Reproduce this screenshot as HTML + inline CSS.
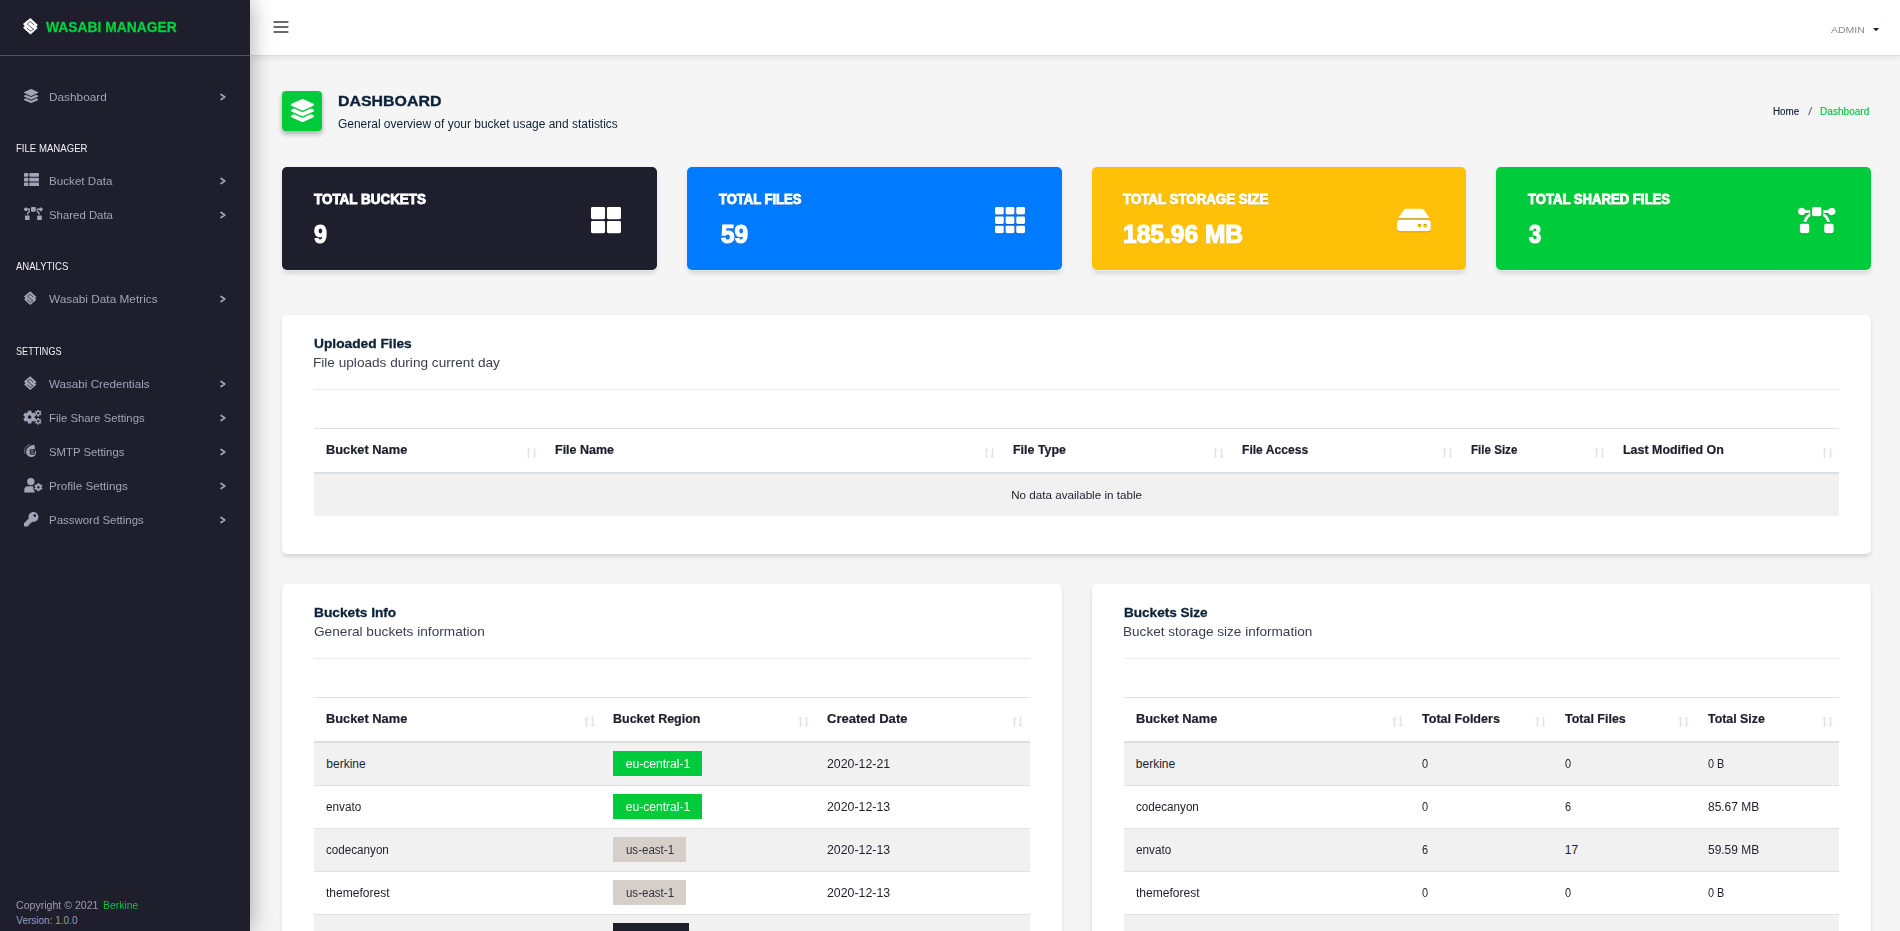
<!DOCTYPE html>
<html lang="en">
<head>
<meta charset="utf-8">
<title>Wasabi Manager - Dashboard</title>
<style>
*{box-sizing:border-box}
html,body{margin:0;padding:0}
body{width:1900px;height:931px;overflow:hidden;background:#f5f5f5;font-family:"Liberation Sans",sans-serif;font-size:12px;color:#1e1e2d;position:relative}
h1,h3,h5,h6,p,ol{margin:0;padding:0;font-weight:inherit;font-size:inherit;list-style:none}
a{text-decoration:none;color:inherit}
.t{display:inline-block;white-space:pre;line-height:1;transform-origin:left center}
.i{position:absolute;display:block;overflow:visible}
.sidebar{position:absolute;left:0;top:0;width:250px;height:931px;background:#1e1e2d;z-index:5;box-shadow:0 0 22px rgba(0,0,0,.36)}
.brand{position:absolute;left:0;top:0;width:250px;height:56px;border-bottom:1px solid #4d5364}
.topbar{position:absolute;left:250px;top:0;width:1650px;height:55px;background:#fff;z-index:3;box-shadow:0 1px 0 #dadee6,0 3px 6px rgba(0,0,0,.075)}
.topbar .i,.topbar .t{margin-left:-250px}
.phicon{position:absolute;left:282px;top:91px;width:40px;height:40px;border-radius:4px;background:#00cc3b;box-shadow:0 3px 5px rgba(0,0,0,.3)}
.stat{position:absolute;top:167px;width:374.75px;height:103px;border-radius:5px;box-shadow:0 0 0 .8px #eef0f5,0 3.5px 5px -1px rgba(0,0,0,.15)}
.stat .t{text-shadow:0 1px 1px rgba(0,0,0,.22)}
.si{position:absolute;display:block;filter:drop-shadow(0 1px .6px rgba(0,0,0,.22))}
.si .i{position:static}
.card{position:absolute;background:#fff;border-radius:5px;box-shadow:0 2.5px 5px -1px rgba(0,0,0,.17)}
.card hr{position:absolute;left:32px;right:32px;margin:0;border:0;border-top:1px solid #e9ebf0;height:0}
table.dt{position:absolute;border-collapse:separate;border-spacing:0;table-layout:fixed}
.dt th{position:relative;height:44px;padding:0 0 0 12.3px;text-align:left;vertical-align:middle;border-top:1px solid #dee2e6;font-weight:700;color:#1e1e2d}
.dt td{height:43px;padding:0 0 0 12.3px;vertical-align:middle;border-top:1px solid #dee2e6;color:#1e1e2d}
.dt tbody tr:first-child td{border-top:2px solid #dadfe5;height:44px}
.dt tr.odd td{background:#f1f1f1}
.badge{position:relative;top:-.6px;display:inline-block;height:25px;line-height:25px;text-align:center;vertical-align:middle}
.badge .t{line-height:26px}
</style>
</head>
<body>

<aside class="sidebar">
  <div class="brand"><svg class="i" style="left:23.3px;top:17.7px" width="15" height="16.5" viewBox="0 0 15 16.5"><path fill="#fff" d="M7.4 0 L14.9 6.9 L13.2 8.5 L14.7 10.1 L7.5 16.5 L0.1 9.7 L1.8 8.1 L0 6.1 Z"/><path fill="none" stroke="#1e1e2d" stroke-opacity="0.7" stroke-width="1.0" d="M11.2 7.0 L7.2 3.5 L4.2 6.0 L10.6 11.4 L7.6 13.2 L3.6 9.8"/></svg><span class="t" style="font-size:15.4px;font-weight:700;-webkit-text-stroke:0.3px currentColor;transform:scaleX(0.8999);position:absolute;left:46.05px;top:19.46px;color:#00d13f;">WASABI MANAGER</span></div>
  <nav>
    <a class="mi" href="#"><svg class="i" width="14.20" height="14.2" viewBox="0 0 512 512" style="left:23.8px;top:88.7px"><path fill="#a2a3b7" d="M12.41 148.02l232.94 105.67c6.8 3.09 14.49 3.09 21.29 0l232.94-105.67c16.55-7.51 16.55-32.52 0-40.03L266.65 2.31a25.607 25.607 0 0 0-21.29 0L12.41 107.98c-16.55 7.51-16.55 32.53 0 40.04zm487.18 88.28l-58.09-26.33-161.64 73.27c-7.56 3.43-15.59 5.17-23.86 5.17s-16.29-1.74-23.86-5.17L70.51 209.97l-58.1 26.33c-16.55 7.5-16.55 32.5 0 40l232.94 105.59c6.8 3.08 14.49 3.08 21.29 0L499.59 276.3c16.55-7.5 16.55-32.5 0-40zm0 127.8l-57.87-26.23-161.86 73.37c-7.56 3.43-15.59 5.17-23.86 5.17s-16.29-1.74-23.86-5.17L70.29 337.87 12.41 364.1c-16.55 7.5-16.55 32.5 0 40l232.94 105.59c6.8 3.08 14.49 3.08 21.29 0L499.59 404.1c16.55-7.5 16.55-32.5 0-40z"/></svg><span class="t" style="font-size:11.6px;transform:scaleX(1.0183);position:absolute;left:49.30px;top:91.38px;color:#a2a3b7;">Dashboard</span><svg class="i" style="left:219px;top:91.5px" width="8" height="10" viewBox="0 0 8 10"><path d="M2.1 2.45 L5.8 5 L2.1 7.55" fill="none" stroke="#a2a3b7" stroke-width="1.75" stroke-linecap="round" stroke-linejoin="round"/></svg></a>
    <h6 class="sec"><span class="t" style="font-size:10.1px;transform:scaleX(0.9510);position:absolute;left:16.30px;top:144.15px;color:#f0f0f5;">FILE MANAGER</span></h6>
    <a class="mi" href="#"><svg class="i" style="left:23.5px;top:173px" width="15" height="13.1" viewBox="0 0 15 13.1" fill="#a2a3b7"><rect x="0" y="0.00" width="4.4" height="3.7" rx=".7"/><rect x="5.3" y="0.00" width="9.7" height="3.7" rx=".7"/><rect x="0" y="4.70" width="4.4" height="3.7" rx=".7"/><rect x="5.3" y="4.70" width="9.7" height="3.7" rx=".7"/><rect x="0" y="9.40" width="4.4" height="3.7" rx=".7"/><rect x="5.3" y="9.40" width="9.7" height="3.7" rx=".7"/></svg><span class="t" style="font-size:11.6px;transform:scaleX(1.0046);position:absolute;left:49.30px;top:175.38px;color:#a2a3b7;">Bucket Data</span><svg class="i" style="left:219px;top:175.5px" width="8" height="10" viewBox="0 0 8 10"><path d="M2.1 2.45 L5.8 5 L2.1 7.55" fill="none" stroke="#a2a3b7" stroke-width="1.75" stroke-linecap="round" stroke-linejoin="round"/></svg></a>
    <a class="mi" href="#"><svg class="i" width="18.75" height="15" viewBox="0 0 640 512" style="left:23.5px;top:206.3px"><path fill="#a2a3b7" d="M368 32h-96c-17.67 0-32 14.33-32 32v96c0 17.67 14.33 32 32 32h96c17.67 0 32-14.33 32-32V64c0-17.67-14.33-32-32-32zM208 88h-84.75C113.75 64.56 90.84 48 64 48 28.66 48 0 76.65 0 112s28.66 64 64 64c26.84 0 49.75-16.56 59.25-40h79.73c-55.37 32.52-95.86 87.32-109.54 152h49.4c11.3-41.61 36.77-77.21 71.04-101.56-3.7-8.08-5.88-16.99-5.88-26.44V88zm-48 232H64c-17.67 0-32 14.33-32 32v96c0 17.67 14.33 32 32 32h96c17.67 0 32-14.33 32-32v-96c0-17.67-14.33-32-32-32zM576 48c-26.84 0-49.75 16.56-59.25 40H432v72c0 9.45-2.19 18.36-5.88 26.44 34.27 24.35 59.74 59.95 71.04 101.56h49.4c-13.68-64.68-54.17-119.48-109.54-152h79.73c9.5 23.44 32.41 40 59.25 40 35.34 0 64-28.65 64-64s-28.66-64-64-64zm0 272h-96c-17.67 0-32 14.33-32 32v96c0 17.67 14.33 32 32 32h96c17.67 0 32-14.33 32-32v-96c0-17.67-14.33-32-32-32z"/></svg><span class="t" style="font-size:11.6px;transform:scaleX(0.9825);position:absolute;left:49.30px;top:209.38px;color:#a2a3b7;">Shared Data</span><svg class="i" style="left:219px;top:209.5px" width="8" height="10" viewBox="0 0 8 10"><path d="M2.1 2.45 L5.8 5 L2.1 7.55" fill="none" stroke="#a2a3b7" stroke-width="1.75" stroke-linecap="round" stroke-linejoin="round"/></svg></a>
    <h6 class="sec"><span class="t" style="font-size:10.1px;transform:scaleX(0.9441);position:absolute;left:16.30px;top:262.15px;color:#f0f0f5;">ANALYTICS</span></h6>
    <a class="mi" href="#"><svg class="i" style="left:23.6px;top:290.8px" width="12.6" height="14.4" viewBox="0 0 15 16.5"><path fill="#a2a3b7" d="M7.4 0 L14.9 6.9 L13.2 8.5 L14.7 10.1 L7.5 16.5 L0.1 9.7 L1.8 8.1 L0 6.1 Z"/><path fill="none" stroke="#1e1e2d" stroke-opacity="0.85" stroke-width="1.0" d="M11.2 7.0 L7.2 3.5 L4.2 6.0 L10.6 11.4 L7.6 13.2 L3.6 9.8"/></svg><span class="t" style="font-size:11.6px;transform:scaleX(1.0195);position:absolute;left:49.30px;top:293.38px;color:#a2a3b7;">Wasabi Data Metrics</span><svg class="i" style="left:219px;top:293.6px" width="8" height="10" viewBox="0 0 8 10"><path d="M2.1 2.45 L5.8 5 L2.1 7.55" fill="none" stroke="#a2a3b7" stroke-width="1.75" stroke-linecap="round" stroke-linejoin="round"/></svg></a>
    <h6 class="sec"><span class="t" style="font-size:10.1px;transform:scaleX(0.9026);position:absolute;left:16.30px;top:347.15px;color:#f0f0f5;">SETTINGS</span></h6>
    <a class="mi" href="#"><svg class="i" style="left:23.6px;top:375.8px" width="12.6" height="14.4" viewBox="0 0 15 16.5"><path fill="#a2a3b7" d="M7.4 0 L14.9 6.9 L13.2 8.5 L14.7 10.1 L7.5 16.5 L0.1 9.7 L1.8 8.1 L0 6.1 Z"/><path fill="none" stroke="#1e1e2d" stroke-opacity="0.85" stroke-width="1.0" d="M11.2 7.0 L7.2 3.5 L4.2 6.0 L10.6 11.4 L7.6 13.2 L3.6 9.8"/></svg><span class="t" style="font-size:11.6px;transform:scaleX(1.0050);position:absolute;left:49.30px;top:378.38px;color:#a2a3b7;">Wasabi Credentials</span><svg class="i" style="left:219px;top:378.6px" width="8" height="10" viewBox="0 0 8 10"><path d="M2.1 2.45 L5.8 5 L2.1 7.55" fill="none" stroke="#a2a3b7" stroke-width="1.75" stroke-linecap="round" stroke-linejoin="round"/></svg></a>
    <a class="mi" href="#"><svg class="i" style="left:23.4px;top:409.7px" width="18.75" height="14.5" viewBox="0 0 18.75 14.5"><path fill="#a2a3b7" fill-rule="evenodd" d="M8.53 11.63 L8.39 13.47 L4.91 13.47 L4.77 11.63 L3.67 10.99 L2.01 11.79 L0.27 8.77 L1.79 7.74 L1.79 6.46 L0.27 5.43 L2.01 2.41 L3.67 3.21 L4.77 2.57 L4.91 0.73 L8.39 0.73 L8.53 2.57 L9.63 3.21 L11.29 2.41 L13.03 5.43 L11.51 6.46 L11.51 7.74 L13.03 8.77 L11.29 11.79 L9.63 10.99Z M4.85 7.10 a1.8 1.8 0 1 0 3.6 0 a1.8 1.8 0 1 0 -3.6 0Z M16.12 5.42 L16.08 6.43 L14.32 6.43 L14.28 5.42 L13.74 5.10 L12.84 5.58 L11.96 4.05 L12.82 3.51 L12.82 2.89 L11.96 2.35 L12.84 0.82 L13.74 1.30 L14.28 0.98 L14.32 -0.03 L16.08 -0.03 L16.12 0.98 L16.66 1.30 L17.56 0.82 L18.44 2.35 L17.58 2.89 L17.58 3.51 L18.44 4.05 L17.56 5.58 L16.66 5.10Z M14.00 3.20 a1.2 1.2 0 1 0 2.4 0 a1.2 1.2 0 1 0 -2.4 0Z M16.12 13.52 L16.08 14.53 L14.32 14.53 L14.28 13.52 L13.74 13.20 L12.84 13.68 L11.96 12.15 L12.82 11.61 L12.82 10.99 L11.96 10.45 L12.84 8.92 L13.74 9.40 L14.28 9.08 L14.32 8.07 L16.08 8.07 L16.12 9.08 L16.66 9.40 L17.56 8.92 L18.44 10.45 L17.58 10.99 L17.58 11.61 L18.44 12.15 L17.56 13.68 L16.66 13.20Z M14.00 11.30 a1.2 1.2 0 1 0 2.4 0 a1.2 1.2 0 1 0 -2.4 0Z"/></svg><span class="t" style="font-size:11.6px;transform:scaleX(0.9760);position:absolute;left:49.30px;top:412.38px;color:#a2a3b7;">File Share Settings</span><svg class="i" style="left:219px;top:412.6px" width="8" height="10" viewBox="0 0 8 10"><path d="M2.1 2.45 L5.8 5 L2.1 7.55" fill="none" stroke="#a2a3b7" stroke-width="1.75" stroke-linecap="round" stroke-linejoin="round"/></svg></a>
    <a class="mi" href="#"><svg class="i" style="left:24.0px;top:444.0px" width="13" height="13.5" viewBox="0 0 13 13.5"><path fill="#a2a3b7" d="M10.2 0.8 C7 1 3.2 3.4 2.4 6.5 C1.6 9.2 3 12 6.5 12.9 C9.5 13.4 12 11.6 12 9 C12.2 7.6 11.6 6.6 10.8 6.1 C11 4.1 10.9 2.5 10.2 0.8 Z"/><rect x="5.7" y="4.9" width="5.4" height="5.9" rx="1.3" fill="#1e1e2d" fill-opacity=".86"/><circle cx="8" cy="6.6" r=".75" fill="#a2a3b7"/><path d="M7 8.9 H10.2" stroke="#a2a3b7" stroke-width=".8" stroke-opacity=".8"/><path fill="none" stroke="#a2a3b7" stroke-width=".75" stroke-opacity=".85" d="M6 0.45 C2.6 1.5 0.35 4.5 0.5 7.6 C0.6 8.6 0.9 9.3 1.4 9.9"/></svg><span class="t" style="font-size:11.6px;transform:scaleX(0.9778);position:absolute;left:49.30px;top:446.38px;color:#a2a3b7;">SMTP Settings</span><svg class="i" style="left:219px;top:446.6px" width="8" height="10" viewBox="0 0 8 10"><path d="M2.1 2.45 L5.8 5 L2.1 7.55" fill="none" stroke="#a2a3b7" stroke-width="1.75" stroke-linecap="round" stroke-linejoin="round"/></svg></a>
    <a class="mi" href="#"><svg class="i" style="left:23.9px;top:477.6px" width="18.75" height="14.5" viewBox="0 0 18.75 14.5" fill="#a2a3b7"><circle cx="6.8" cy="3.6" r="3.7"/><path d="M0.3 14.4 V11.6 C0.3 9.4 2 8.2 4 8.2 H9.3 C9.2 10 9.4 12.4 11.2 14.4 Z"/><path fill-rule="evenodd" d="M15.55 11.97 L15.51 13.25 L13.29 13.25 L13.25 11.97 L12.57 11.58 L11.45 12.19 L10.34 10.27 L11.43 9.59 L11.43 8.81 L10.34 8.13 L11.45 6.21 L12.57 6.82 L13.25 6.43 L13.29 5.15 L15.51 5.15 L15.55 6.43 L16.23 6.82 L17.35 6.21 L18.46 8.13 L17.37 8.81 L17.37 9.59 L18.46 10.27 L17.35 12.19 L16.23 11.58Z M13.20 9.20 a1.2 1.2 0 1 0 2.4 0 a1.2 1.2 0 1 0 -2.4 0Z"/></svg><span class="t" style="font-size:11.6px;transform:scaleX(1.0105);position:absolute;left:49.30px;top:480.38px;color:#a2a3b7;">Profile Settings</span><svg class="i" style="left:219px;top:480.6px" width="8" height="10" viewBox="0 0 8 10"><path d="M2.1 2.45 L5.8 5 L2.1 7.55" fill="none" stroke="#a2a3b7" stroke-width="1.75" stroke-linecap="round" stroke-linejoin="round"/></svg></a>
    <a class="mi" href="#"><svg class="i" width="14.40" height="14.4" viewBox="0 0 512 512" style="left:23.6px;top:511.7px"><path fill="#a2a3b7" d="M512 176.001C512 273.203 433.202 352 336 352c-11.22 0-22.19-1.062-32.827-3.069l-24.012 27.014A23.999 23.999 0 0 1 261.223 384H224v40c0 13.255-10.745 24-24 24h-40v40c0 13.255-10.745 24-24 24H24c-13.255 0-24-10.745-24-24v-78.059c0-6.365 2.529-12.47 7.029-16.971l161.802-161.802C163.108 213.814 160 195.271 160 176 160 78.798 238.797.001 335.999 0 433.488-.001 512 78.511 512 176.001zM336 128c0 26.51 21.49 48 48 48s48-21.49 48-48-21.49-48-48-48-48 21.49-48 48z"/></svg><span class="t" style="font-size:11.6px;transform:scaleX(0.9873);position:absolute;left:49.30px;top:514.38px;color:#a2a3b7;">Password Settings</span><svg class="i" style="left:219px;top:514.6px" width="8" height="10" viewBox="0 0 8 10"><path d="M2.1 2.45 L5.8 5 L2.1 7.55" fill="none" stroke="#a2a3b7" stroke-width="1.75" stroke-linecap="round" stroke-linejoin="round"/></svg></a>
  </nav>
  <footer class="sfoot">
    <span class="t" style="font-size:10px;transform:scaleX(1.0573);position:absolute;left:16.30px;top:901.33px;color:#9b9caf;">Copyright © 2021</span><span class="t" style="font-size:10px;transform:scaleX(1.0395);position:absolute;left:102.60px;top:901.33px;color:#00c63c;">Berkine</span>
    <span class="t" style="font-size:10px;position:absolute;left:16.30px;top:916.33px;color:#9b9caf;">Version: 1.0.0</span>
  </footer>
</aside>

<header class="topbar">
  <svg class="i" style="left:274px;top:21px" width="14" height="12" viewBox="0 0 14 12"><path d="M.3 1h13.3M.3 6h13.3M.3 11h13.3" stroke="#6b6b6b" stroke-width="2" stroke-linecap="round"/></svg>
  <span class="t" style="font-size:9.5px;transform:scaleX(1.1057);position:absolute;left:1831.20px;top:24.86px;color:#8a8a8a;">ADMIN</span>
  <svg class="i" style="left:1872.8px;top:27.9px" width="6.2" height="3.2" viewBox="0 0 6.4 3.4"><path d="M0 0H6.4L3.2 3.4Z" fill="#0b2238"/></svg>
</header>
<main>

<section class="pagehead">
  <div class="phicon"><svg class="i" width="23.00" height="23" viewBox="0 0 512 512" style="left:8.6px;top:8.3px"><path fill="#fff" d="M12.41 148.02l232.94 105.67c6.8 3.09 14.49 3.09 21.29 0l232.94-105.67c16.55-7.51 16.55-32.52 0-40.03L266.65 2.31a25.607 25.607 0 0 0-21.29 0L12.41 107.98c-16.55 7.51-16.55 32.53 0 40.04zm487.18 88.28l-58.09-26.33-161.64 73.27c-7.56 3.43-15.59 5.17-23.86 5.17s-16.29-1.74-23.86-5.17L70.51 209.97l-58.1 26.33c-16.55 7.5-16.55 32.5 0 40l232.94 105.59c6.8 3.08 14.49 3.08 21.29 0L499.59 276.3c16.55-7.5 16.55-32.5 0-40zm0 127.8l-57.87-26.23-161.86 73.37c-7.56 3.43-15.59 5.17-23.86 5.17s-16.29-1.74-23.86-5.17L70.29 337.87 12.41 364.1c-16.55 7.5-16.55 32.5 0 40l232.94 105.59c6.8 3.08 14.49 3.08 21.29 0L499.59 404.1c16.55-7.5 16.55-32.5 0-40z"/></svg></div>
  <h1><span class="t" style="font-size:15.2px;font-weight:700;-webkit-text-stroke:0.35px currentColor;transform:scaleX(1.0470);position:absolute;left:337.63px;top:93.03px;color:#0b2238;">DASHBOARD</span></h1>
  <p><span class="t" style="font-size:12px;transform:scaleX(0.9964);position:absolute;left:338.00px;top:117.64px;color:#0b2238;">General overview of your bucket usage and statistics</span></p>
  <ol class="crumb">
    <span class="t" style="font-size:10px;-webkit-text-stroke:0.15px currentColor;transform:scaleX(0.9829);position:absolute;left:1773.08px;top:106.53px;color:#0b2238;">Home</span>
    <span class="t" style="font-size:10.5px;transform:scaleX(1.4667);position:absolute;left:1807.50px;top:106.11px;color:#6c757d;">/</span>
    <span class="t" style="font-size:10px;-webkit-text-stroke:0.15px currentColor;transform:scaleX(1.0081);position:absolute;left:1819.58px;top:106.53px;color:#00c63c;">Dashboard</span>
  </ol>
</section>
<section class="stats"><article class="stat" style="left:282px;width:375px;background:#1e1e2d"><h5><span class="t" style="font-size:14.3px;font-weight:700;-webkit-text-stroke:0.9px currentColor;transform:scaleX(0.9397);position:absolute;left:32.15px;top:25.00px;color:#fff;">TOTAL BUCKETS</span></h5><p><span class="t" style="font-size:25.5px;font-weight:700;-webkit-text-stroke:1.2px currentColor;transform:scaleX(0.9143);position:absolute;left:32.20px;top:54.81px;color:#fff;">9</span></p><span class="si" style="left:308.50px;top:40.02px"><svg class="i" width="30" height="26.25" viewBox="0 0 512 448" fill="#fff"><rect x="0" y="0" width="240" height="208" rx="24"/><rect x="272" y="0" width="240" height="208" rx="24"/><rect x="0" y="240" width="240" height="208" rx="24"/><rect x="272" y="240" width="240" height="208" rx="24"/></svg></span></article><article class="stat" style="left:687px;width:375px;background:#007bff"><h5><span class="t" style="font-size:14.3px;font-weight:700;-webkit-text-stroke:0.9px currentColor;transform:scaleX(0.9095);position:absolute;left:32.05px;top:25.00px;color:#fff;">TOTAL FILES</span></h5><p><span class="t" style="font-size:25.5px;font-weight:700;-webkit-text-stroke:1.2px currentColor;transform:scaleX(0.9581);position:absolute;left:33.60px;top:54.81px;color:#fff;">59</span></p><span class="si" style="left:308.20px;top:40.02px"><svg class="i" width="30" height="26.25" viewBox="0 0 512 448" fill="#fff"><rect x="0.0" y="0" width="149.33" height="128" rx="24"/><rect x="181.3" y="0" width="149.33" height="128" rx="24"/><rect x="362.7" y="0" width="149.33" height="128" rx="24"/><rect x="0.0" y="160" width="149.33" height="128" rx="24"/><rect x="181.3" y="160" width="149.33" height="128" rx="24"/><rect x="362.7" y="160" width="149.33" height="128" rx="24"/><rect x="0.0" y="320" width="149.33" height="128" rx="24"/><rect x="181.3" y="320" width="149.33" height="128" rx="24"/><rect x="362.7" y="320" width="149.33" height="128" rx="24"/></svg></span></article><article class="stat" style="left:1092px;width:374px;background:#ffc107"><h5><span class="t" style="font-size:14.3px;font-weight:700;-webkit-text-stroke:0.9px currentColor;transform:scaleX(0.9304);position:absolute;left:31.25px;top:25.00px;color:#fff;">TOTAL STORAGE SIZE</span></h5><p><span class="t" style="font-size:25.5px;font-weight:700;-webkit-text-stroke:1.2px currentColor;transform:scaleX(0.9625);position:absolute;left:30.74px;top:54.81px;color:#fff;">185.96 MB</span></p><span class="si" style="left:305.35px;top:38.15px"><svg class="i" width="33.75" height="30" viewBox="0 0 576 512" style=""><path fill="#fff" d="M576 304v96c0 26.51-21.49 48-48 48H48c-26.51 0-48-21.49-48-48v-96c0-26.51 21.49-48 48-48h480c26.51 0 48 21.49 48 48zm-48-80a79.557 79.557 0 0 1 30.777 6.165L462.25 85.374A48.003 48.003 0 0 0 422.311 64H153.689a48 48 0 0 0-39.938 21.374L17.223 230.165A79.557 79.557 0 0 1 48 224h480zm-48 96c-17.673 0-32 14.327-32 32s14.327 32 32 32 32-14.327 32-32-14.327-32-32-32zm-96 0c-17.673 0-32 14.327-32 32s14.327 32 32 32 32-14.327 32-32-14.327-32-32-32z"/></svg></span></article><article class="stat" style="left:1496px;width:375px;background:#00cc3b"><h5><span class="t" style="font-size:14.3px;font-weight:700;-webkit-text-stroke:0.9px currentColor;transform:scaleX(0.9165);position:absolute;left:32.45px;top:25.00px;color:#fff;">TOTAL SHARED FILES</span></h5><p><span class="t" style="font-size:25.5px;font-weight:700;-webkit-text-stroke:1.2px currentColor;transform:scaleX(0.8571);position:absolute;left:33.00px;top:54.81px;color:#fff;">3</span></p><span class="si" style="left:302.10px;top:38.15px"><svg class="i" width="37.50" height="30" viewBox="0 0 640 512" style=""><path fill="#fff" d="M368 32h-96c-17.67 0-32 14.33-32 32v96c0 17.67 14.33 32 32 32h96c17.67 0 32-14.33 32-32V64c0-17.67-14.33-32-32-32zM208 88h-84.75C113.75 64.56 90.84 48 64 48 28.66 48 0 76.65 0 112s28.66 64 64 64c26.84 0 49.75-16.56 59.25-40h79.73c-55.37 32.52-95.86 87.32-109.54 152h49.4c11.3-41.61 36.77-77.21 71.04-101.56-3.7-8.08-5.88-16.99-5.88-26.44V88zm-48 232H64c-17.67 0-32 14.33-32 32v96c0 17.67 14.33 32 32 32h96c17.67 0 32-14.33 32-32v-96c0-17.67-14.33-32-32-32zM576 48c-26.84 0-49.75 16.56-59.25 40H432v72c0 9.45-2.19 18.36-5.88 26.44 34.27 24.35 59.74 59.95 71.04 101.56h49.4c-13.68-64.68-54.17-119.48-109.54-152h79.73c9.5 23.44 32.41 40 59.25 40 35.34 0 64-28.65 64-64s-28.66-64-64-64zm0 272h-96c-17.67 0-32 14.33-32 32v96c0 17.67 14.33 32 32 32h96c17.67 0 32-14.33 32-32v-96c0-17.67-14.33-32-32-32z"/></svg></span></article></section><section class="card" style="left:282px;top:315px;width:1589px;height:238.5px"><h3><span class="t" style="font-size:13px;font-weight:700;-webkit-text-stroke:0.3px currentColor;transform:scaleX(1.0571);position:absolute;left:32.45px;top:21.80px;color:#0b2238;">Uploaded Files</span></h3><p><span class="t" style="font-size:13px;transform:scaleX(1.0473);position:absolute;left:31.25px;top:41.20px;color:#3a3f51;">File uploads during current day</span></p><hr style="top:74px"><table class="dt" style="left:32px;top:113px;width:1525px"><colgroup><col style="width:229px"><col style="width:458px"><col style="width:229px"><col style="width:229px"><col style="width:152px"><col style="width:228px"></colgroup><thead><tr><th><span class="t" style="font-size:11.9px;font-weight:700;-webkit-text-stroke:0.2px currentColor;transform:scaleX(1.0789);margin-left:0.12px;position:relative;top:-1px;">Bucket Name</span><svg class="i" style="left:209.5px;top:17.8px" width="13" height="12" viewBox="0 0 13 12" fill="none" stroke="#e3e3e3" stroke-width="1.5"><path d="M4.5 11V1.4"/><path d="M2.6 3.4L4.5 1.4L6.4 3.4" stroke-width="1"/><path d="M10.5 0.7V10.3"/><path d="M8.6 8.3L10.5 10.3L12.4 8.3" stroke-width="1"/></svg></th><th><span class="t" style="font-size:11.9px;font-weight:700;-webkit-text-stroke:0.2px currentColor;transform:scaleX(1.0502);margin-left:0.12px;position:relative;top:-1px;">File Name</span><svg class="i" style="left:438.5px;top:17.8px" width="13" height="12" viewBox="0 0 13 12" fill="none" stroke="#e3e3e3" stroke-width="1.5"><path d="M4.5 11V1.4"/><path d="M2.6 3.4L4.5 1.4L6.4 3.4" stroke-width="1"/><path d="M10.5 0.7V10.3"/><path d="M8.6 8.3L10.5 10.3L12.4 8.3" stroke-width="1"/></svg></th><th><span class="t" style="font-size:11.9px;font-weight:700;-webkit-text-stroke:0.2px currentColor;transform:scaleX(1.0462);margin-left:0.12px;position:relative;top:-1px;">File Type</span><svg class="i" style="left:209.5px;top:17.8px" width="13" height="12" viewBox="0 0 13 12" fill="none" stroke="#e3e3e3" stroke-width="1.5"><path d="M4.5 11V1.4"/><path d="M2.6 3.4L4.5 1.4L6.4 3.4" stroke-width="1"/><path d="M10.5 0.7V10.3"/><path d="M8.6 8.3L10.5 10.3L12.4 8.3" stroke-width="1"/></svg></th><th><span class="t" style="font-size:11.9px;font-weight:700;-webkit-text-stroke:0.2px currentColor;transform:scaleX(1.0178);margin-left:0.12px;position:relative;top:-1px;">File Access</span><svg class="i" style="left:209.5px;top:17.8px" width="13" height="12" viewBox="0 0 13 12" fill="none" stroke="#e3e3e3" stroke-width="1.5"><path d="M4.5 11V1.4"/><path d="M2.6 3.4L4.5 1.4L6.4 3.4" stroke-width="1"/><path d="M10.5 0.7V10.3"/><path d="M8.6 8.3L10.5 10.3L12.4 8.3" stroke-width="1"/></svg></th><th><span class="t" style="font-size:11.9px;font-weight:700;-webkit-text-stroke:0.2px currentColor;transform:scaleX(0.9736);margin-left:0.12px;position:relative;top:-1px;">File Size</span><svg class="i" style="left:132.5px;top:17.8px" width="13" height="12" viewBox="0 0 13 12" fill="none" stroke="#e3e3e3" stroke-width="1.5"><path d="M4.5 11V1.4"/><path d="M2.6 3.4L4.5 1.4L6.4 3.4" stroke-width="1"/><path d="M10.5 0.7V10.3"/><path d="M8.6 8.3L10.5 10.3L12.4 8.3" stroke-width="1"/></svg></th><th><span class="t" style="font-size:11.9px;font-weight:700;-webkit-text-stroke:0.2px currentColor;transform:scaleX(1.0460);margin-left:0.12px;position:relative;top:-1px;">Last Modified On</span><svg class="i" style="left:208.5px;top:17.8px" width="13" height="12" viewBox="0 0 13 12" fill="none" stroke="#e3e3e3" stroke-width="1.5"><path d="M4.5 11V1.4"/><path d="M2.6 3.4L4.5 1.4L6.4 3.4" stroke-width="1"/><path d="M10.5 0.7V10.3"/><path d="M8.6 8.3L10.5 10.3L12.4 8.3" stroke-width="1"/></svg></th></tr></thead><tbody><tr class="odd"><td colspan="6" style="text-align:center;padding:0"><span class="t" style="font-size:11.5px;transform:scaleX(1.0128);transform-origin:center center;">No data available in table</span></td></tr></tbody></table></section><section class="card" style="left:282px;top:584px;width:779.75px;height:420px"><h3><span class="t" style="font-size:13px;font-weight:700;-webkit-text-stroke:0.3px currentColor;transform:scaleX(1.0542);position:absolute;left:32.45px;top:21.80px;color:#0b2238;">Buckets Info</span></h3><p><span class="t" style="font-size:13px;transform:scaleX(1.0502);position:absolute;left:32.30px;top:41.20px;color:#3a3f51;">General buckets information</span></p><hr style="top:74px"><table class="dt" style="left:32px;top:113px;width:715.75px"><colgroup><col style="width:287px"><col style="width:214px"><col style="width:214.75px"></colgroup><thead><tr><th><span class="t" style="font-size:11.9px;font-weight:700;-webkit-text-stroke:0.2px currentColor;transform:scaleX(1.0789);margin-left:0.12px;position:relative;top:-1px;">Bucket Name</span><svg class="i" style="left:267.5px;top:17.8px" width="13" height="12" viewBox="0 0 13 12" fill="none" stroke="#e3e3e3" stroke-width="1.5"><path d="M4.5 11V1.4"/><path d="M2.6 3.4L4.5 1.4L6.4 3.4" stroke-width="1"/><path d="M10.5 0.7V10.3"/><path d="M8.6 8.3L10.5 10.3L12.4 8.3" stroke-width="1"/></svg></th><th><span class="t" style="font-size:11.9px;font-weight:700;-webkit-text-stroke:0.2px currentColor;transform:scaleX(1.0508);margin-left:0.12px;position:relative;top:-1px;">Bucket Region</span><svg class="i" style="left:194.5px;top:17.8px" width="13" height="12" viewBox="0 0 13 12" fill="none" stroke="#e3e3e3" stroke-width="1.5"><path d="M4.5 11V1.4"/><path d="M2.6 3.4L4.5 1.4L6.4 3.4" stroke-width="1"/><path d="M10.5 0.7V10.3"/><path d="M8.6 8.3L10.5 10.3L12.4 8.3" stroke-width="1"/></svg></th><th><span class="t" style="font-size:11.9px;font-weight:700;-webkit-text-stroke:0.2px currentColor;transform:scaleX(1.0971);margin-left:0.12px;position:relative;top:-1px;">Created Date</span><svg class="i" style="left:195.25px;top:17.8px" width="13" height="12" viewBox="0 0 13 12" fill="none" stroke="#e3e3e3" stroke-width="1.5"><path d="M4.5 11V1.4"/><path d="M2.6 3.4L4.5 1.4L6.4 3.4" stroke-width="1"/><path d="M10.5 0.7V10.3"/><path d="M8.6 8.3L10.5 10.3L12.4 8.3" stroke-width="1"/></svg></th></tr></thead><tbody><tr class="odd"><td><span class="t" style="font-size:12px;margin-left:0.00px;">berkine</span></td><td><span class="badge" style="background:#00cc3b;color:#fff;width:89px"><span class="t" style="font-size:12px;transform:scaleX(1.0061);transform-origin:center center;">eu-central-1</span></span></td><td><span class="t" style="font-size:12px;transform:scaleX(1.0290);margin-left:0.00px;">2020-12-21</span></td></tr><tr class="even"><td><span class="t" style="font-size:12px;transform:scaleX(0.9792);margin-left:0.00px;">envato</span></td><td><span class="badge" style="background:#00cc3b;color:#fff;width:89px"><span class="t" style="font-size:12px;transform:scaleX(1.0061);transform-origin:center center;">eu-central-1</span></span></td><td><span class="t" style="font-size:12px;transform:scaleX(1.0290);margin-left:0.00px;">2020-12-13</span></td></tr><tr class="odd"><td><span class="t" style="font-size:12px;transform:scaleX(0.9712);margin-left:0.00px;">codecanyon</span></td><td><span class="badge" style="background:#d6cec9;color:#33343f;width:73px"><span class="t" style="font-size:12px;transform:scaleX(0.9633);transform-origin:center center;">us-east-1</span></span></td><td><span class="t" style="font-size:12px;transform:scaleX(1.0290);margin-left:0.00px;">2020-12-13</span></td></tr><tr class="even"><td><span class="t" style="font-size:12px;transform:scaleX(1.0042);margin-left:0.00px;">themeforest</span></td><td><span class="badge" style="background:#d6cec9;color:#33343f;width:73px"><span class="t" style="font-size:12px;transform:scaleX(0.9633);transform-origin:center center;">us-east-1</span></span></td><td><span class="t" style="font-size:12px;transform:scaleX(1.0290);margin-left:0.00px;">2020-12-13</span></td></tr><tr class="odd"><td><span class="t" style="font-size:12px;margin-left:0.00px;"></span></td><td><span class="badge" style="background:#1e1e2d;color:#fff;width:75.8px"><span class="t" style="font-size:12px;transform-origin:center center;"></span></span></td><td><span class="t" style="font-size:12px;margin-left:0.00px;"></span></td></tr></tbody></table></section><section class="card" style="left:1091.5px;top:584px;width:779.5px;height:420px"><h3><span class="t" style="font-size:13px;font-weight:700;-webkit-text-stroke:0.3px currentColor;transform:scaleX(1.0429);position:absolute;left:32.45px;top:21.80px;color:#0b2238;">Buckets Size</span></h3><p><span class="t" style="font-size:13px;transform:scaleX(1.0437);position:absolute;left:31.26px;top:41.20px;color:#3a3f51;">Bucket storage size information</span></p><hr style="top:74px"><table class="dt" style="left:32px;top:113px;width:715.5px"><colgroup><col style="width:286px"><col style="width:143px"><col style="width:143px"><col style="width:143.5px"></colgroup><thead><tr><th><span class="t" style="font-size:11.9px;font-weight:700;-webkit-text-stroke:0.2px currentColor;transform:scaleX(1.0789);margin-left:0.12px;position:relative;top:-1px;">Bucket Name</span><svg class="i" style="left:266.5px;top:17.8px" width="13" height="12" viewBox="0 0 13 12" fill="none" stroke="#e3e3e3" stroke-width="1.5"><path d="M4.5 11V1.4"/><path d="M2.6 3.4L4.5 1.4L6.4 3.4" stroke-width="1"/><path d="M10.5 0.7V10.3"/><path d="M8.6 8.3L10.5 10.3L12.4 8.3" stroke-width="1"/></svg></th><th><span class="t" style="font-size:11.9px;font-weight:700;-webkit-text-stroke:0.2px currentColor;transform:scaleX(1.0559);margin-left:0.12px;position:relative;top:-1px;">Total Folders</span><svg class="i" style="left:123.5px;top:17.8px" width="13" height="12" viewBox="0 0 13 12" fill="none" stroke="#e3e3e3" stroke-width="1.5"><path d="M4.5 11V1.4"/><path d="M2.6 3.4L4.5 1.4L6.4 3.4" stroke-width="1"/><path d="M10.5 0.7V10.3"/><path d="M8.6 8.3L10.5 10.3L12.4 8.3" stroke-width="1"/></svg></th><th><span class="t" style="font-size:11.9px;font-weight:700;-webkit-text-stroke:0.2px currentColor;transform:scaleX(1.0496);margin-left:0.12px;position:relative;top:-1px;">Total Files</span><svg class="i" style="left:123.5px;top:17.8px" width="13" height="12" viewBox="0 0 13 12" fill="none" stroke="#e3e3e3" stroke-width="1.5"><path d="M4.5 11V1.4"/><path d="M2.6 3.4L4.5 1.4L6.4 3.4" stroke-width="1"/><path d="M10.5 0.7V10.3"/><path d="M8.6 8.3L10.5 10.3L12.4 8.3" stroke-width="1"/></svg></th><th><span class="t" style="font-size:11.9px;font-weight:700;-webkit-text-stroke:0.2px currentColor;transform:scaleX(1.0418);margin-left:0.12px;position:relative;top:-1px;">Total Size</span><svg class="i" style="left:124.0px;top:17.8px" width="13" height="12" viewBox="0 0 13 12" fill="none" stroke="#e3e3e3" stroke-width="1.5"><path d="M4.5 11V1.4"/><path d="M2.6 3.4L4.5 1.4L6.4 3.4" stroke-width="1"/><path d="M10.5 0.7V10.3"/><path d="M8.6 8.3L10.5 10.3L12.4 8.3" stroke-width="1"/></svg></th></tr></thead><tbody><tr class="odd"><td><span class="t" style="font-size:12px;margin-left:0.00px;">berkine</span></td><td><span class="t" style="font-size:12px;transform:scaleX(0.9143);margin-left:0.00px;">0</span></td><td><span class="t" style="font-size:12px;transform:scaleX(0.9143);margin-left:0.00px;">0</span></td><td><span class="t" style="font-size:12px;transform:scaleX(0.9052);margin-left:0.00px;">0 B</span></td></tr><tr class="even"><td><span class="t" style="font-size:12px;transform:scaleX(0.9712);margin-left:0.00px;">codecanyon</span></td><td><span class="t" style="font-size:12px;transform:scaleX(0.9143);margin-left:0.00px;">0</span></td><td><span class="t" style="font-size:12px;transform:scaleX(0.9143);margin-left:0.00px;">6</span></td><td><span class="t" style="font-size:12px;transform:scaleX(0.9949);margin-left:0.00px;">85.67 MB</span></td></tr><tr class="odd"><td><span class="t" style="font-size:12px;transform:scaleX(0.9792);margin-left:0.00px;">envato</span></td><td><span class="t" style="font-size:12px;transform:scaleX(0.9143);margin-left:0.00px;">6</span></td><td><span class="t" style="font-size:12px;margin-left:0.00px;">17</span></td><td><span class="t" style="font-size:12px;transform:scaleX(0.9949);margin-left:0.00px;">59.59 MB</span></td></tr><tr class="even"><td><span class="t" style="font-size:12px;transform:scaleX(1.0042);margin-left:0.00px;">themeforest</span></td><td><span class="t" style="font-size:12px;transform:scaleX(0.9143);margin-left:0.00px;">0</span></td><td><span class="t" style="font-size:12px;transform:scaleX(0.9143);margin-left:0.00px;">0</span></td><td><span class="t" style="font-size:12px;transform:scaleX(0.9052);margin-left:0.00px;">0 B</span></td></tr><tr class="odd"><td><span class="t" style="font-size:12px;margin-left:0.00px;"></span></td><td><span class="t" style="font-size:12px;margin-left:0.00px;"></span></td><td><span class="t" style="font-size:12px;margin-left:0.00px;"></span></td><td><span class="t" style="font-size:12px;margin-left:0.00px;"></span></td></tr></tbody></table></section>
</main>
</body>
</html>
